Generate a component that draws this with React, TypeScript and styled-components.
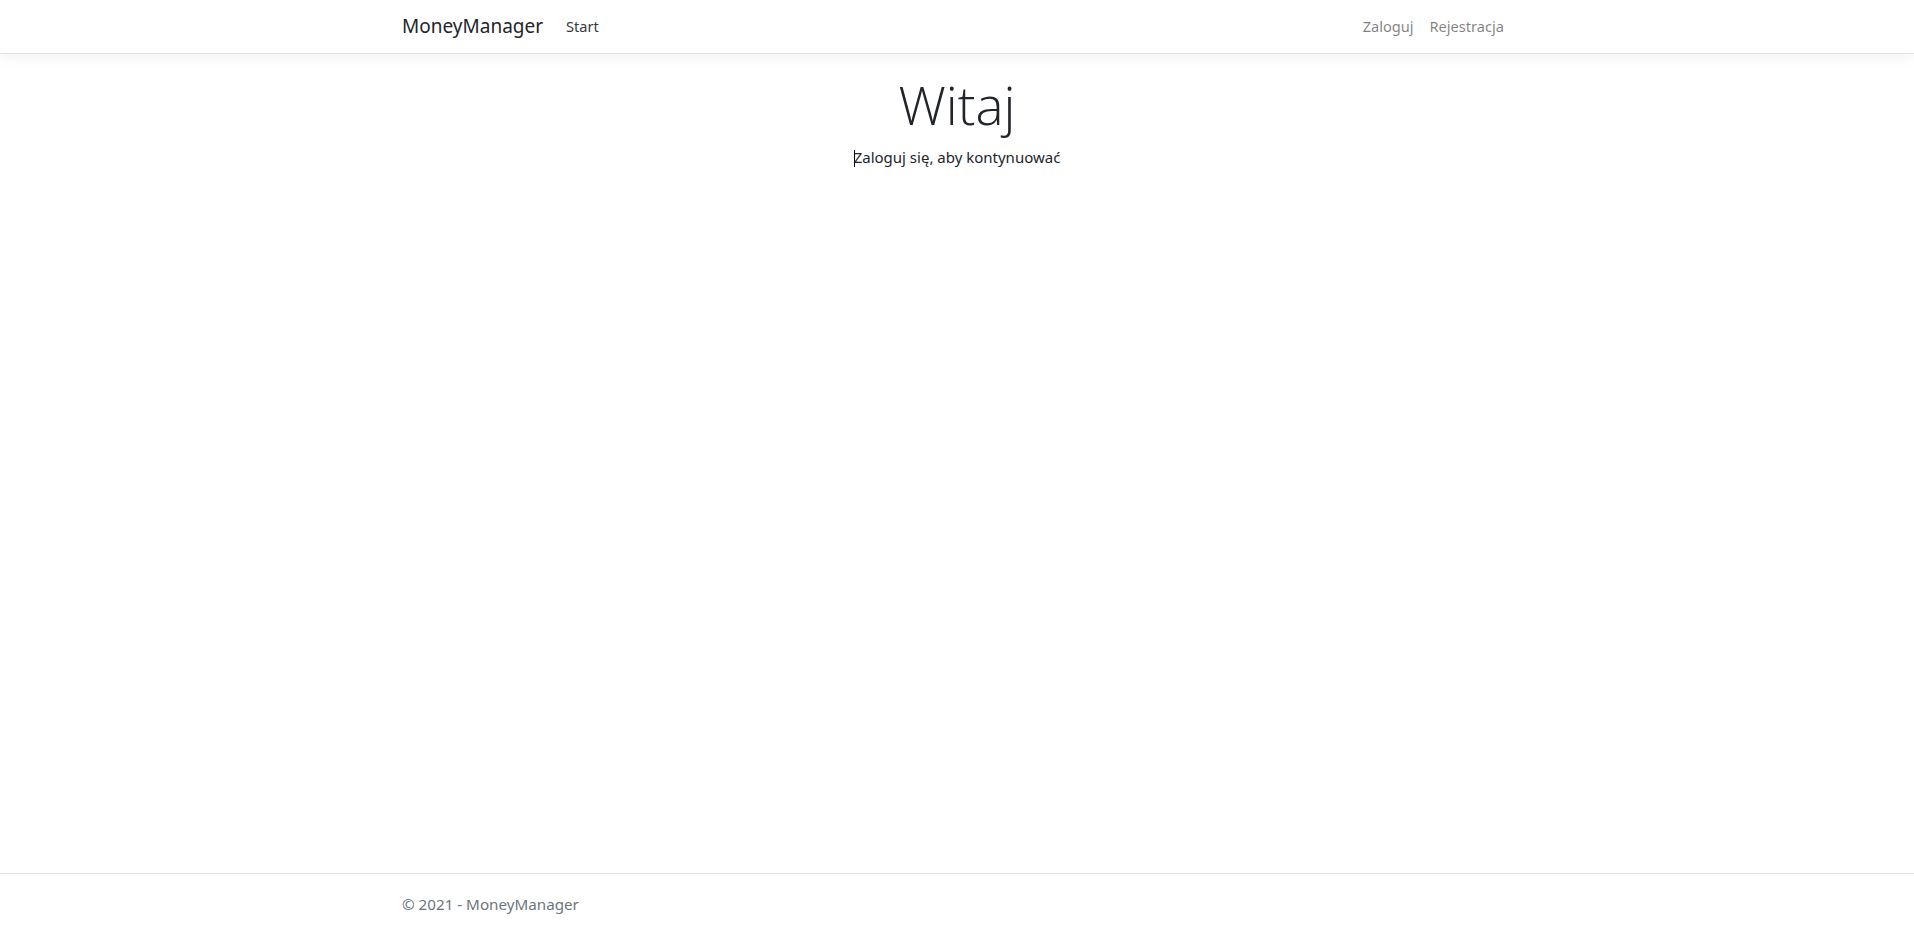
import React from "react";
import styled, { createGlobalStyle } from "styled-components";

const GlobalStyle = createGlobalStyle`
  html, body { margin: 0; padding: 0; }
  body {
    font-family: "Noto Sans", "Open Sans", "Liberation Sans", sans-serif;
    font-size: 16px;
    line-height: 1.5;
    color: #212529;
    background: #fff;
  }
  * { box-sizing: border-box; }
`;

const Page = styled.div`
  min-height: 928px;
  display: flex;
  flex-direction: column;
`;

const Header = styled.header`
  height: 54px;
  border-bottom: 1px solid #dee2e6;
  box-shadow: 0 4px 12px rgba(0, 0, 0, 0.05);
  background: #fff;
`;

const Container = styled.div`
  width: 1140px;
  margin: 0 auto;
  padding: 0 15px;
  height: 100%;
  display: flex;
  align-items: center;
`;

const Brand = styled.a`
  font-size: 19px;
  color: #212529;
  text-decoration: none;
  margin-right: 15px;
`;

const NavList = styled.nav<{ $right?: boolean }>`
  display: flex;
  align-items: center;
  margin-left: ${(p) => (p.$right ? "auto" : "0")};
`;

const NavLink = styled.a<{ $muted?: boolean }>`
  font-size: 14.6px;
  padding: 0 8px;
  color: ${(p) => (p.$muted ? "rgba(0,0,0,0.5)" : "#343a40")};
  text-decoration: none;
`;

const Main = styled.main`
  flex: 1;
  padding-top: 18px;
  text-align: center;
`;

const Title = styled.h1`
  font-family: "Open Sans", "Noto Sans", sans-serif;
  font-size: 53px;
  font-weight: 300;
  line-height: 1.25;
  margin: 0 0 8px;
  color: #212529;
`;

const Lead = styled.p`
  margin: 0;
  font-size: 15px;
`;

const Caret = styled.span`
  display: inline-block;
  width: 1px;
  height: 17px;
  background: #000;
  vertical-align: -4px;
  margin-right: -1px;
`;

const Footer = styled.footer`
  height: 55px;
  border-top: 1px solid #dee2e6;
  color: #6c757d;
  font-size: 15.2px;
`;

const FooterInner = styled(Container)`
  padding-top: 6px;
`;

export default function App() {
  return (
    <>
      <GlobalStyle />
      <Page>
        <Header>
          <Container>
            <Brand href="#">MoneyManager</Brand>
            <NavList>
              <NavLink href="#">Start</NavLink>
            </NavList>
            <NavList $right>
              <NavLink $muted href="#">Zaloguj</NavLink>
              <NavLink $muted href="#">Rejestracja</NavLink>
            </NavList>
          </Container>
        </Header>
        <Main>
          <Title>Witaj</Title>
          <Lead>
            <Caret />
            Zaloguj się, aby kontynuować
          </Lead>
        </Main>
        <Footer>
          <FooterInner>© 2021 - MoneyManager</FooterInner>
        </Footer>
      </Page>
    </>
  );
}
